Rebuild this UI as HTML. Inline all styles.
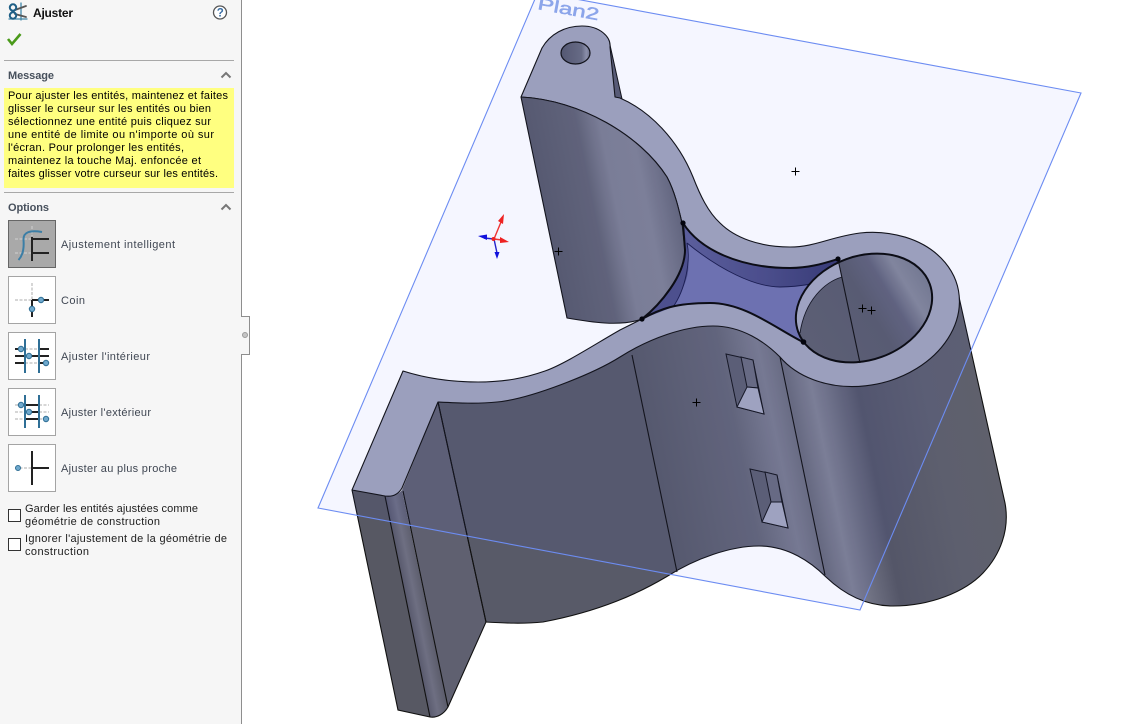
<!DOCTYPE html>
<html><head><meta charset="utf-8"><title>Ajuster</title>
<style>
html,body{margin:0;padding:0;background:#fff;width:1123px;height:724px;overflow:hidden}
svg{display:block}
text{font-family:"Liberation Sans",sans-serif;font-size:11px}
.m{fill:#000}
.l{fill:#3f4652}
.h{font-weight:bold;fill:#47505c}
</style></head><body>
<svg width="1123" height="724" viewBox="0 0 1123 724" xmlns="http://www.w3.org/2000/svg">
<defs>
<linearGradient id="w" gradientUnits="userSpaceOnUse" x1="322" y1="-66" x2="867" y2="-177">
<stop offset="0" stop-color="#585a68"/><stop offset=".40" stop-color="#585a68"/><stop offset=".55" stop-color="#646676"/><stop offset=".62" stop-color="#7a7c8e"/><stop offset=".66" stop-color="#6a6c7c"/><stop offset=".70" stop-color="#7f8192"/><stop offset=".78" stop-color="#545668"/><stop offset=".90" stop-color="#5d5f6e"/><stop offset="1" stop-color="#5f606c"/>
</linearGradient>
<linearGradient id="u" gradientUnits="userSpaceOnUse" x1="470" y1="-96" x2="620" y2="-126">
<stop offset="0" stop-color="#565868"/><stop offset=".4" stop-color="#626474"/><stop offset=".55" stop-color="#7e8092"/><stop offset=".75" stop-color="#808294"/><stop offset="1" stop-color="#5e6072"/>
</linearGradient>
<linearGradient id="hg" gradientUnits="userSpaceOnUse" x1="800" y1="320" x2="935" y2="293">
<stop offset="0" stop-color="#5e606e"/><stop offset=".5" stop-color="#5a5c6c"/><stop offset=".68" stop-color="#62647a"/><stop offset=".82" stop-color="#858899"/><stop offset="1" stop-color="#767a8c"/>
</linearGradient>
<linearGradient id="b" gradientUnits="userSpaceOnUse" x1="690" y1="260" x2="840" y2="260">
<stop offset="0" stop-color="#5c5e96"/><stop offset=".5" stop-color="#4c4e86"/><stop offset="1" stop-color="#383a70"/>
</linearGradient>
<linearGradient id="sh" gradientUnits="userSpaceOnUse" x1="560" y1="53" x2="591" y2="53">
<stop offset="0" stop-color="#55586a"/><stop offset=".7" stop-color="#6a6d80"/><stop offset=".85" stop-color="#9093a6"/><stop offset="1" stop-color="#6a6d80"/>
</linearGradient>
<linearGradient id="t" gradientUnits="userSpaceOnUse" x1="385" y1="500" x2="405" y2="496">
<stop offset="0" stop-color="#55566a"/><stop offset=".5" stop-color="#6e6f82"/><stop offset="1" stop-color="#5c5d6c"/>
</linearGradient>
<clipPath id="rc"><ellipse cx="864" cy="308" rx="70" ry="52" transform="rotate(-20 864 308)"/></clipPath>
</defs>
<rect width="1123" height="724" fill="#fff"/>

<!-- lower wall -->
<path d="M438,402 L497,392 L620,345 L713,315 L790,345 L860,360 L959,297 L1005,503 C1010,530 1000,555 983,573 C965,592 930,606 893,606 C870,606 848,598 826,577 C811,562 788,546 759,546 C731,546 696,558 666,577 C639,593 601,611 543,622 C523,624 504,623 485,622 Z" fill="url(#w)" stroke="#111" stroke-width="1.100"/>
<!-- tab faces -->
<polygon points="402,490 438,402 486,622 448,707" fill="#5f6070"/>
<polygon points="352,490 385,496 430,717 398,710" fill="#575863"/>
<path d="M385,496 C392,497 398,495 402,490 L448,707 C444,714 437,718 430,717 Z" fill="url(#t)"/>
<path d="M352,490 L398,710 L430,717 C437,718 444,714 448,707 L486,622 L438,402" fill="none" stroke="#111" stroke-width="1.100"/>
<g stroke="#111" stroke-width="1.100" fill="none">
<path d="M385,496 L430,717"/><path d="M403,491 L448,707"/><path d="M438,402 L486,622"/>
<path d="M632,355 L677,572"/><path d="M780,357 L825,575"/>
</g>
<!-- windows -->
<g stroke="#15161c" stroke-width="1">
<polygon points="726,354 753,360 764,414 737,407" fill="#5d5f70"/>
<polygon points="741,357 753,360 758,388 747,387" fill="#6a6c7e"/>
<polygon points="747,387 758,388 764,414 737,407" fill="#a4a7bd"/>
<polygon points="750,469 777,475 788,528 762,522" fill="#5d5f70"/>
<polygon points="765,472 777,475 782,502 771,502" fill="#6a6c7e"/>
<polygon points="771,502 782,502 788,528 762,522" fill="#a4a7bd"/>
</g>

<!-- back sliver at top lug -->
<polygon points="610,45 622,99 614,97 610,60" fill="#5a5c70" stroke="#111" stroke-width="1"/>

<!-- top face -->
<path d="M352,490 L403,371 C425,378 450,382 478,382 C505,382 525,378 545,371 C565,364 597,343 620,330 L642,319 L682,223 C679,210 675,192 667,177 C640,135 580,100 521,97 L542,48 C550,34 565,26 582,26 C600,26 611,37 610,47 L615,97 L620,98 C650,111 678,140 693,177 C700,195 708,212 720,223 C735,238 760,247 790,247 C815,247 830,237 860,233 A98,76,-12,1,1,780,357 C765,342 742,326 713,326 C685,326 650,338 620,357 C593,374 530,399 497,402 C477,404 458,403 438,402 L402,488 C398,495 392,497 385,496 Z" fill="#a1a4ba" stroke="#111" stroke-width="1.100" stroke-linejoin="round"/>

<!-- lug hole -->
<ellipse cx="575.500" cy="53" rx="14.500" ry="11" fill="url(#sh)" stroke="#111" stroke-width="1.200"/>

<!-- pocket floor -->
<path d="M683,223 C700,250 740,268 790,268 C810,268 825,263 838,259 L803,342 C775,328 745,303 710,303 C675,303 660,309 642,319 C660,305 685,275 685,250 Z" fill="#7073ad"/>
<!-- pocket wall band -->
<path d="M683,223 C700,250 740,268 790,268 C810,268 825,263 838,259 L842,277 C825,282 800,287 780,287 C755,287 720,270 687,243 Z" fill="url(#b)"/>
<path d="M683,223 C686,235 686,250 685,257 C680,280 660,305 642,319 L673,307 C683,290 690,275 688,263 L687,243 Z" fill="#4f5188"/>
<path d="M687,243 C720,270 755,287 780,287 C800,287 825,282 842,277 M687,243 C691,262 685,290 673,307" fill="none" stroke="#1a1c4a" stroke-width=".9"/>

<!-- upper wall -->
<path d="M521,97 C580,100 640,135 667,177 C675,192 679,210 682,223 L685,250 C685,275 665,300 642,319 C620,327 590,322 567,318 Z" fill="url(#u)" stroke="#111" stroke-width="1.100" stroke-linejoin="round"/>

<!-- ring hole -->
<ellipse cx="864" cy="308" rx="70" ry="52" transform="rotate(-20 864 308)" fill="url(#hg)"/>
<path clip-path="url(#rc)" d="M838,255 L842,277 C825,282 805,300 800,333 L785,345 L785,260 Z" fill="#a5a8bf"/>
<path d="M842,277 C825,282 805,300 800,333" fill="none" stroke="#15161c" stroke-width=".9"/>
<path d="M838,259 L860,363" stroke="#111" stroke-width="1.100"/>

<!-- bold edges -->
<g fill="none" stroke="#0a0a0a" stroke-width="2">
<ellipse cx="864" cy="308" rx="70" ry="52" transform="rotate(-20 864 308)"/>
<path d="M683,223 C700,250 740,268 790,268 C810,268 825,263 838,259"/>
<path d="M803,342 C775,328 745,303 710,303 C675,303 660,309 642,319"/>
<path d="M642,319 C660,305 685,275 685,250 L683,223"/>
</g>
<g fill="#000"><circle cx="683" cy="223" r="2.600"/><circle cx="642" cy="319" r="2.600"/><circle cx="838" cy="259" r="2.600"/><circle cx="803.500" cy="342" r="2.800"/></g>

<!-- plane tint + outline -->
<polygon points="538,-8 1081,93 860,610 318,508" fill="rgba(60,80,255,.05)" stroke="none"/>
<polygon points="538,-8 1081,93 860,610 318,508" fill="none" stroke="#6c8cf2" stroke-width="1.100"/>
<text transform="translate(537,9) rotate(10.500)" x="0" y="0" textLength="62" lengthAdjust="spacingAndGlyphs" style="font-size:17px" fill="#8ca5ea" stroke="#8ca5ea" stroke-width=".5">Plan2</text>

<!-- crosses -->
<g stroke="#000" stroke-width="1" fill="none">
<path d="M791.500,171.500h8M795.500,167.500v8"/><path d="M554.500,251.500h8M558.500,247.500v8"/><path d="M692.500,402.500h8M696.500,398.500v8"/><path d="M858.500,308.500h8M862.500,304.500v8"/><path d="M867.500,310.500h8M871.500,306.500v8"/>
</g>

<!-- triad -->
<g>
<path d="M494,239 L501,222" stroke="#e33" stroke-width="1.400"/><polygon points="504,214 498,221 503,224" fill="#ee2222"/>
<path d="M494,239 L502,240" stroke="#e33" stroke-width="1.400"/><polygon points="509,242 500,237 500,243" fill="#ee2222"/>
<path d="M494,239 L484,238" stroke="#22c" stroke-width="1.400"/><polygon points="478,236 487,234.500 487,240" fill="#1111dd"/>
<path d="M494,239 L497,253" stroke="#22c" stroke-width="1.400"/><polygon points="497,259 494.500,252 499.500,252" fill="#1111dd"/>
<circle cx="493.500" cy="239" r="2" fill="#ee2222"/>
</g>

<!-- panel -->
<rect x="0" y="0" width="241" height="724" fill="#f6f6f6"/>
<path d="M241.500,0 V316.500 H249.500 V354.500 H241.500 V724" fill="#f6f6f6" stroke="#8e8e8e" stroke-width="1"/>
<rect x="240" y="317" width="1.500" height="37" fill="#f6f6f6"/>
<circle cx="245" cy="335" r="2.500" fill="#c4c4c4" stroke="#9a9a9a"/>

<!-- title icon: scissors -->
<g fill="none" stroke-linecap="round">
<path d="M21,3 V20 M9,19 H27" stroke="#3f86a8" stroke-width="1.300"/>
<path d="M15,10 L26,6 M15,14 L26,17" stroke="#555" stroke-width="1.800"/>
<circle cx="13" cy="7.500" r="3.200" stroke="#1f5f86" stroke-width="2"/>
<circle cx="13" cy="15.500" r="3.200" stroke="#1f5f86" stroke-width="2"/>
</g>
<text x="33" y="17" textLength="40" style="font-weight:bold;font-size:12px" fill="#111">Ajuster</text>
<!-- help -->
<circle cx="220" cy="12.500" r="6.500" fill="#fff" stroke="#555" stroke-width="1.300"/>
<text x="216.700" y="16.700" style="font-weight:bold;font-size:11.500px" fill="#3a6ea5">?</text>
<!-- check -->
<path d="M8,39 L12,44 L20.500,34" fill="none" stroke="#4a9a1a" stroke-width="2.600"/>

<rect x="4" y="60" width="230" height="1" fill="#a8a8a8"/>
<text class="h" x="8" y="79" textLength="46">Message</text>
<path d="M221.500,77.500 L226,73 L230.500,77.500" fill="none" stroke="#777" stroke-width="2"/>
<rect x="4" y="88" width="230" height="100" fill="#ffff80"/>
<text class="m" x="8" y="99" textLength="220">Pour ajuster les entités, maintenez et faites</text>
<text class="m" x="8" y="112" textLength="203">glisser le curseur sur les entités ou bien</text>
<text class="m" x="8" y="125" textLength="203">sélectionnez une entité puis cliquez sur</text>
<text class="m" x="8" y="138" textLength="206">une entité de limite ou n'importe où sur</text>
<text class="m" x="8" y="151" textLength="176">l'écran. Pour prolonger les entités,</text>
<text class="m" x="8" y="164" textLength="193">maintenez la touche Maj. enfoncée et</text>
<text class="m" x="8" y="177" textLength="210">faites glisser votre curseur sur les entités.</text>
<rect x="4" y="192" width="230" height="1" fill="#a8a8a8"/>
<text class="h" x="8" y="211" textLength="41">Options</text>
<path d="M221.500,209.500 L226,205 L230.500,209.500" fill="none" stroke="#777" stroke-width="2"/>

<!-- buttons -->
<rect x="8.500" y="220.500" width="47" height="47" fill="#a9a9a9" stroke="#666"/>
<rect x="8.500" y="276.500" width="47" height="47" fill="#fff" stroke="#a4a4a4"/>
<rect x="8.500" y="332.500" width="47" height="47" fill="#fff" stroke="#a4a4a4"/>
<rect x="8.500" y="388.500" width="47" height="47" fill="#fff" stroke="#a4a4a4"/>
<rect x="8.500" y="444.500" width="47" height="47" fill="#fff" stroke="#a4a4a4"/>

<g fill="none" stroke-width="1.500">
<!-- 1 -->
<path d="M15,239H31M15,253H31M32,226V236" stroke="#c4c4c4" stroke-dasharray="3 1.500"/>
<path d="M18.500,260 C24,254 24,246 23.500,240 C23,232 30,230 42,232" stroke="#3b7ea6" stroke-width="2"/>
<path d="M32,237V261M32,239H49M32,253H49" stroke="#222" stroke-width="2"/>
<!-- 2 -->
<path d="M15,300H32M32,283V300" stroke="#c8c8c8" stroke-dasharray="3 1.500"/>
<path d="M32,300H49M32,300V317" stroke="#222" stroke-width="2"/>
<!-- 3 -->
<path d="M25,349H39M25,363H39" stroke="#c8c8c8" stroke-dasharray="3 1.500"/>
<path d="M15,349H25M39,349H49M15,356H49M15,363H25M39,363H49" stroke="#222" stroke-width="2"/>
<path d="M25,339V373M39,339V373" stroke="#2f6f96" stroke-width="2"/>
<!-- 4 -->
<path d="M15,405H25M39,405H49M15,412H25M39,412H49M15,419H25M39,419H49" stroke="#c8c8c8" stroke-dasharray="3 1.500"/>
<path d="M25,405H39M25,412H39M25,419H39" stroke="#222" stroke-width="2"/>
<path d="M25,395V428M39,395V428" stroke="#2f6f96" stroke-width="2"/>
<!-- 5 -->
<path d="M15,468H32" stroke="#c8c8c8" stroke-dasharray="3 1.500"/>
<path d="M32,451V485M32,468H49" stroke="#222" stroke-width="2"/>
</g>
<g fill="#6fa8cc" stroke="#2f6f96" stroke-width="1">
<circle cx="41" cy="300" r="2.700"/><circle cx="32" cy="309" r="2.700"/>
<circle cx="21" cy="349" r="2.700"/><circle cx="29" cy="356" r="2.700"/><circle cx="46" cy="363" r="2.700"/>
<circle cx="21" cy="405" r="2.700"/><circle cx="29" cy="412" r="2.700"/><circle cx="46" cy="419" r="2.700"/>
<circle cx="18" cy="468" r="2.500"/>
</g>

<text class="l" x="61" y="248" textLength="114">Ajustement intelligent</text>
<text class="l" x="61" y="304" textLength="24">Coin</text>
<text class="l" x="61" y="360" textLength="89">Ajuster l'intérieur</text>
<text class="l" x="61" y="416" textLength="90">Ajuster l'extérieur</text>
<text class="l" x="61" y="472" textLength="116">Ajuster au plus proche</text>

<rect x="8.500" y="509.500" width="12" height="12" fill="#fff" stroke="#333"/>
<rect x="8.500" y="538.500" width="12" height="12" fill="#fff" stroke="#333"/>
<text fill="#1c1c1c" x="25" y="512" textLength="173">Garder les entités ajustées comme</text>
<text fill="#1c1c1c" x="25" y="525" textLength="135">géométrie de construction</text>
<text fill="#1c1c1c" x="25" y="542" textLength="202">Ignorer l'ajustement de la géométrie de</text>
<text fill="#1c1c1c" x="25" y="555" textLength="64">construction</text>
</svg>
</body></html>
